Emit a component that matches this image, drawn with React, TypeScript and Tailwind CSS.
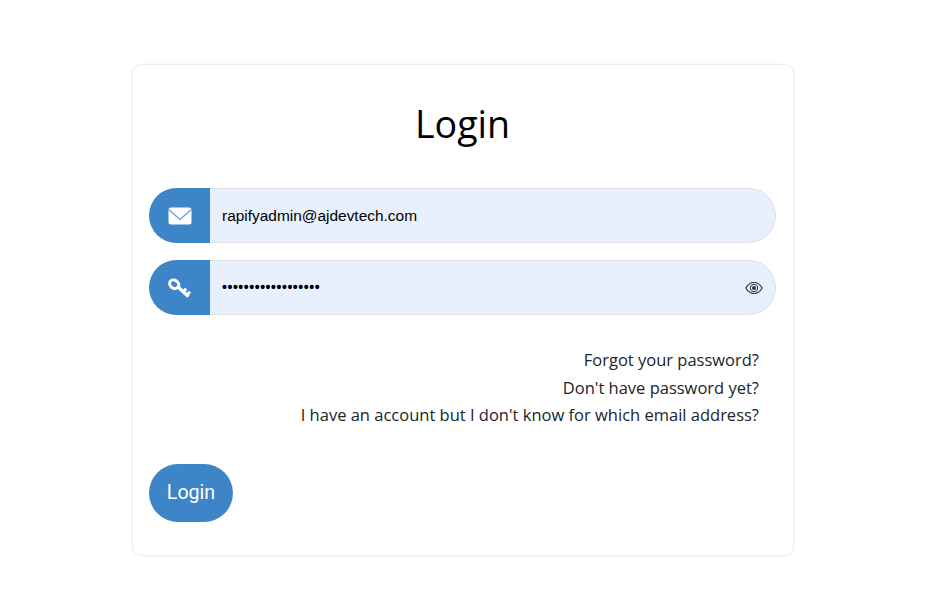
function MailIcon() {
  return (
    <svg viewBox="0 0 24 18" className="w-[24px] h-[18px]">
      <rect x="0.5" y="0.5" width="23" height="17" rx="2.5" fill="#ffffff" />
      <path d="M1 2.8 L12 12.5 L23 2.8" fill="none" stroke="#5f9dd6" strokeWidth="1.2" />
    </svg>
  );
}

function KeyIcon() {
  return (
    <svg viewBox="0 0 24 24" className="w-[24px] h-[24px] text-white" fill="none" stroke="currentColor">
      <ellipse cx="6.2" cy="8.2" rx="4.8" ry="4" strokeWidth="3" transform="rotate(35 6.2 8.2)" />
      <path d="M10.5 11.5 L20.5 20.5" strokeWidth="3.4" />
      <path d="M15 16 L18.2 12.6 M18.5 19.5 L22 15.8" strokeWidth="3" />
    </svg>
  );
}

function EyeIcon() {
  return (
    <svg viewBox="0 0 18 14" className="w-[18px] h-[14px] text-[#333333]" fill="none" stroke="currentColor">
      <path d="M0.8 7 C3 3.2 6 1.5 9 1.5 C12 1.5 15 3.2 17.2 7 C15 10.8 12 12.5 9 12.5 C6 12.5 3 10.8 0.8 7 Z" strokeWidth="1.2" />
      <circle cx="9" cy="7" r="3.7" strokeWidth="1" />
      <circle cx="9" cy="7" r="2" fill="currentColor" stroke="none" />
    </svg>
  );
}

function Field({ icon, value, dots, trailing }: { icon: React.ReactNode; value: string; dots?: boolean; trailing?: React.ReactNode }) {
  return (
    <div className="flex h-[55px] w-[627px]">
      <div className="w-[61px] shrink-0 rounded-l-full bg-[#3d85c6] flex items-center justify-center">{icon}</div>
      <div className="flex-1 flex items-center justify-between rounded-r-full bg-[#e8f0fe] border border-l-0 border-[#dfe1e6] pl-[12px] pr-[12px]">
        <span className={dots ? "text-[14px] text-black font-bold tracking-[0.55px] font-['Liberation_Sans',sans-serif]" : "text-[15.45px] text-black font-['Liberation_Sans',sans-serif]"}>
          {value}
        </span>
        {trailing}
      </div>
    </div>
  );
}

export default function App() {
  return (
    <div className="min-h-[616px] bg-white pt-[64px] pl-[132px]">
      <div className="w-[662px] h-[492px] rounded-[10px] border border-[#eeeeee] bg-white pl-[16px] pt-[34px] shadow-[0_0_3px_rgba(0,0,0,0.06)]">
        <h1 className="w-[627px] text-center text-[37.6px] leading-[50px] text-black font-['Open_Sans',sans-serif]">Login</h1>

        <div className="mt-[39px] flex flex-col gap-[17px]">
          <Field icon={<MailIcon />} value="rapifyadmin@ajdevtech.com" />
          <Field icon={<KeyIcon />} value={'•'.repeat(18)} dots trailing={<EyeIcon />} />
        </div>

        <div className="mt-[31px] w-[610px] text-right text-[16.5px] leading-[27.5px] text-[#212529] font-['Open_Sans',sans-serif]">
          <p>Forgot your password?</p>
          <p>Don't have password yet?</p>
          <p>I have an account but I don't know for which email address?</p>
        </div>

        <button className="mt-[35px] block w-[84px] h-[58px] rounded-[29px] bg-[#3d85c6] text-white text-[19.6px] font-['Roboto',sans-serif]">
          Login
        </button>
      </div>
    </div>
  );
}
